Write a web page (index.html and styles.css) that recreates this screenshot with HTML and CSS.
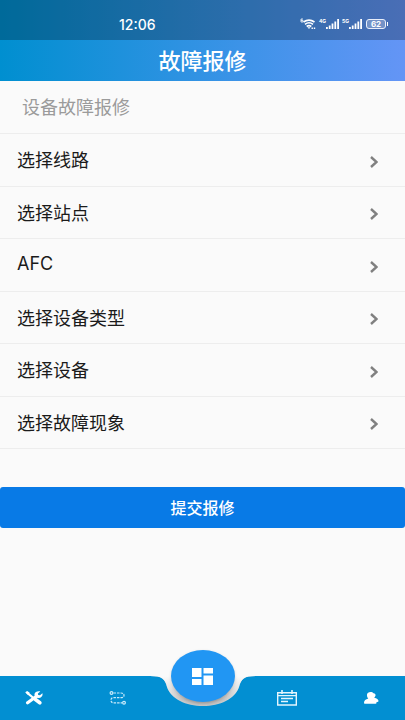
FILE: index.html
```html
<!DOCTYPE html>
<html lang="zh-CN">
<head>
<meta charset="utf-8">
<meta name="viewport" content="width=device-width, initial-scale=1">
<title>故障报修</title>
<link rel="stylesheet" href="styles.css">
</head>
<body>
<header class="top">
  <div class="status">
    <time class="clock">12:06</time>
    <div class="signals">
      <svg class="wifi" width="16" height="12" viewBox="0 0 16 12" fill="none" stroke="currentColor">
        <path d="M3 1H1v3h2V2.400H1" stroke-width=".8"/>
        <path d="M3.500 4Q9 .2 14.500 4M5 6.300Q9 3.300 13 6.300M6.700 8.500Q9 6.800 11.300 8.500" stroke-width="1.600"/>
        <path d="M7.500 9.300h3L9 11zM11.500 9.500h1.400v1.400h-1.400zM13.800 9.500h1.400v1.400h-1.400z" fill="currentColor" stroke="none"/>
      </svg>
      <span class="cell"><span class="gen">4G</span>
        <svg width="13" height="10" viewBox="0 0 13 10" fill="currentColor"><path d="M0 8h1.800v2H0zM2.800 6.500h1.800V10H2.800zM5.600 4.500h1.800V10H5.600zM8.400 2.500h1.800V10H8.400zM11.200 0H13v10h-1.800z"/></svg>
      </span>
      <span class="cell"><span class="gen">5G</span>
        <svg width="13" height="10" viewBox="0 0 13 10" fill="currentColor"><path d="M0 8h1.800v2H0zM2.800 6.500h1.800V10H2.800zM5.600 4.500h1.800V10H5.600zM8.400 2.500h1.800V10H8.400zM11.200 0H13v10h-1.800z"/></svg>
      </span>
      <span class="battery">62</span>
    </div>
  </div>
  <h1 class="title">故障报修</h1>
</header>

<main class="content">
  <h2 class="section">设备故障报修</h2>
  <div class="list">
    <button type="button" class="row"><span>选择线路</span><svg class="chevron" width="8" height="12" viewBox="0 0 8 12"><path d="M1 1l5.500 5L1 11"/></svg></button>
    <button type="button" class="row"><span>选择站点</span><svg class="chevron" width="8" height="12" viewBox="0 0 8 12"><path d="M1 1l5.500 5L1 11"/></svg></button>
    <button type="button" class="row"><span class="latin">AFC</span><svg class="chevron" width="8" height="12" viewBox="0 0 8 12"><path d="M1 1l5.500 5L1 11"/></svg></button>
    <button type="button" class="row"><span>选择设备类型</span><svg class="chevron" width="8" height="12" viewBox="0 0 8 12"><path d="M1 1l5.500 5L1 11"/></svg></button>
    <button type="button" class="row"><span>选择设备</span><svg class="chevron" width="8" height="12" viewBox="0 0 8 12"><path d="M1 1l5.500 5L1 11"/></svg></button>
    <button type="button" class="row"><span>选择故障现象</span><svg class="chevron" width="8" height="12" viewBox="0 0 8 12"><path d="M1 1l5.500 5L1 11"/></svg></button>
  </div>
  <button type="submit" class="submit">提交报修</button>
</main>

<nav class="tabs">
  <button type="button" class="tab" aria-label="维修">
    <svg width="18" height="14" viewBox="0 0 18 14" fill="none" stroke="#fff">
      <path d="M2 1.700L9 7.500" stroke-width="2.200"/>
      <path d="M.2 1.200L2.200 0l2.500 1.800-2 1.900z" fill="#fff" stroke="none"/>
      <path d="M10.500 8.500l4.300 3.300" stroke-width="3.600" stroke-linecap="round"/>
      <path d="M2.600 11.800L11.500 5.200" stroke-width="3.200" stroke-linecap="round"/>
      <path d="M15.300.4l-2.400 2.100.3 1.500 1.800.3L17.400 2.200c.7 2.300-1 4.800-3.600 4.800-2.600 0-4.600-1.600-4.300-3.900C9.800 1 12.500-.3 15.300.4z" fill="#fff" stroke="none"/>
    </svg>
  </button>
  <button type="button" class="tab" aria-label="线路">
    <svg width="18" height="14" viewBox="0 0 18 14" fill="none" stroke="#c9eafa">
      <circle cx="2.500" cy="2" r="1.400" stroke-width="1.200"/>
      <circle cx="15" cy="11.800" r="1.400" stroke-width="1.200"/>
      <path d="M4.500 2H12Q15 2 15 4.300T12 6.700H4.500Q2 6.700 2 9.200T4.500 11.800H13" stroke-width="1.200" stroke-dasharray="2.500 1"/>
    </svg>
  </button>
  <div class="tab center">
    <svg class="notch" width="106" height="31" viewBox="0 0 106 31">
      <defs><radialGradient id="shade" gradientUnits="userSpaceOnUse" cx="0" cy="0" r="1" gradientTransform="translate(53 2) scale(38 31)"><stop offset=".8" stop-color="#b4b4b4"/><stop offset="1" stop-color="#d6d6d6"/></radialGradient>
      <linearGradient id="fade" x1="0" y1="0" x2="0" y2="1"><stop offset="0" stop-color="#fafafa"/><stop offset=".35" stop-color="#fafafa" stop-opacity=".6"/><stop offset=".8" stop-color="#fafafa" stop-opacity="0"/></linearGradient></defs>
      <path d="M0 0C12 0 15 3 17 11C21 23 36 30 53 30S85 23 89 11C91 3 94 0 106 0z" fill="url(#shade)"/>
      <path d="M0 0C12 0 15 3 17 11C21 23 36 30 53 30S85 23 89 11C91 3 94 0 106 0z" fill="url(#fade)"/>
    </svg>
    <button type="button" class="fab" aria-label="首页">
      <svg width="21" height="17" viewBox="0 0 21 17" fill="#fff"><path d="M0 0h9.500v9H0zM11.500 0H21v5.500h-9.500zM0 11h9.500v6H0zM11.500 7.500H21V17h-9.500z"/></svg>
    </button>
  </div>
  <button type="button" class="tab" aria-label="日程">
    <svg width="20" height="16" viewBox="0 0 20 16" fill="none" stroke="#e4f5fd">
      <path d="M.7 2.700h18.600v12.300H.7z" stroke-width="1.400"/>
      <path d="M1 5.700h18M4 8.500h12M4 11.500h7" stroke-width="1.300"/>
      <path d="M5 0v4M15 0v4" stroke-width="1.600"/>
    </svg>
  </button>
  <button type="button" class="tab" aria-label="我的">
    <svg width="15" height="12" viewBox="0 0 15 12" fill="#fff"><path d="M3 2.400C3.200.9 4.600 0 6.500 0c1.400 0 2.400.5 3 1.300 1.500.2 2.300 1.200 2 2.500-.2.800-.7 1.400-1.300 1.900 2.600.7 4.300 1.800 4.300 3.300 0 .7-.7 1-2 1V11c0 .5-.4.800-1 .8H1.200C.4 11.800 0 11.500 0 10.800 0 8.800 1.700 7.300 4.300 6.600 3.300 5.400 2.800 3.800 3 2.400z"/></svg>
  </button>
</nav>
</body>
</html>
```
FILE: styles.css
```css
* {
  box-sizing: border-box;
}

body {
  margin: 0;
  min-height: 100vh;
  display: flex;
  flex-direction: column;
  background: #fafafa;
  color: #1b1b1b;
  font-family: "Noto Sans CJK SC", sans-serif;
}

button {
  border: 0;
  padding: 0;
  background: none;
  color: inherit;
  font: inherit;
  cursor: pointer;
}

svg {
  display: block;
}

.top {
  background: linear-gradient(90deg, #008fd0, #3d93e8 60%, #6495f6);
  color: #fff;
}

.status {
  display: grid;
  grid-template-columns: 1fr auto;
  align-items: center;
  height: 40px;
  padding: 8px 17px 0 119px;
  background: rgba(0, 0, 0, 0.26);
  font-family: Inter, sans-serif;
}

.clock {
  font-size: 14px;
  font-weight: 500;
}

.signals {
  display: flex;
  align-items: center;
  gap: 3px;
}

.cell {
  display: flex;
  align-items: flex-end;
}

.gen {
  align-self: flex-start;
  font-size: 5px;
  font-weight: 700;
  line-height: 5px;
}

.battery {
  position: relative;
  width: 20px;
  margin: 0 2px 0 1px;
  border: 1px solid #e8eefa;
  border-radius: 3px;
  background: rgba(255, 255, 255, 0.25);
  font-size: 8px;
  font-weight: 700;
  line-height: 8px;
  text-align: center;
}

.battery::after {
  content: "";
  position: absolute;
  top: 2px;
  right: -3px;
  width: 1px;
  height: 4px;
  background: #fff;
}

.title {
  margin: 0;
  padding-bottom: 3px;
  font-size: 22px;
  font-weight: 500;
  line-height: 38px;
  text-align: center;
}

.content {
  flex: 1;
}

.section {
  margin: 0;
  padding: 0 22px 2px;
  border-bottom: 1px solid #ededed;
  color: #9b9b9b;
  font-size: 18px;
  font-weight: 400;
  line-height: 50px;
}

.list {
  display: grid;
  grid-template-rows: repeat(6, 1fr);
  height: 315px;
}

.row {
  display: flex;
  align-items: center;
  justify-content: space-between;
  padding: 0 27px 1px 17px;
  border-bottom: 1px solid #ededed;
  font-size: 18px;
  line-height: 24px;
  text-align: left;
}

.latin {
  font-family: Inter, sans-serif;
}

.chevron {
  margin-top: 5px;
  fill: none;
  stroke: #808080;
  stroke-width: 2.4;
}

.submit {
  display: block;
  width: 100%;
  height: 41px;
  margin: 38px 0 24px;
  padding-bottom: 2px;
  border-radius: 3px;
  background: #087ae6;
  color: #fff;
  font-size: 16px;
  font-weight: 500;
}

.tabs {
  display: flex;
  align-items: center;
  justify-content: space-between;
  height: 44px;
  padding: 0 22px;
  background: #028fd2;
}

.tab {
  display: flex;
  align-items: center;
  justify-content: center;
  width: 24px;
  height: 44px;
}

.center {
  position: relative;
}

.notch {
  position: absolute;
  top: 0;
  left: 50%;
  transform: translateX(-50%);
}

.fab {
  position: absolute;
  top: -26px;
  left: 50%;
  display: flex;
  align-items: center;
  justify-content: center;
  width: 64px;
  height: 52px;
  border-radius: 50%;
  background: #2196f3;
  box-shadow: 0 1px 3px rgba(0, 0, 0, 0.15);
  transform: translateX(-50%);
}
```
